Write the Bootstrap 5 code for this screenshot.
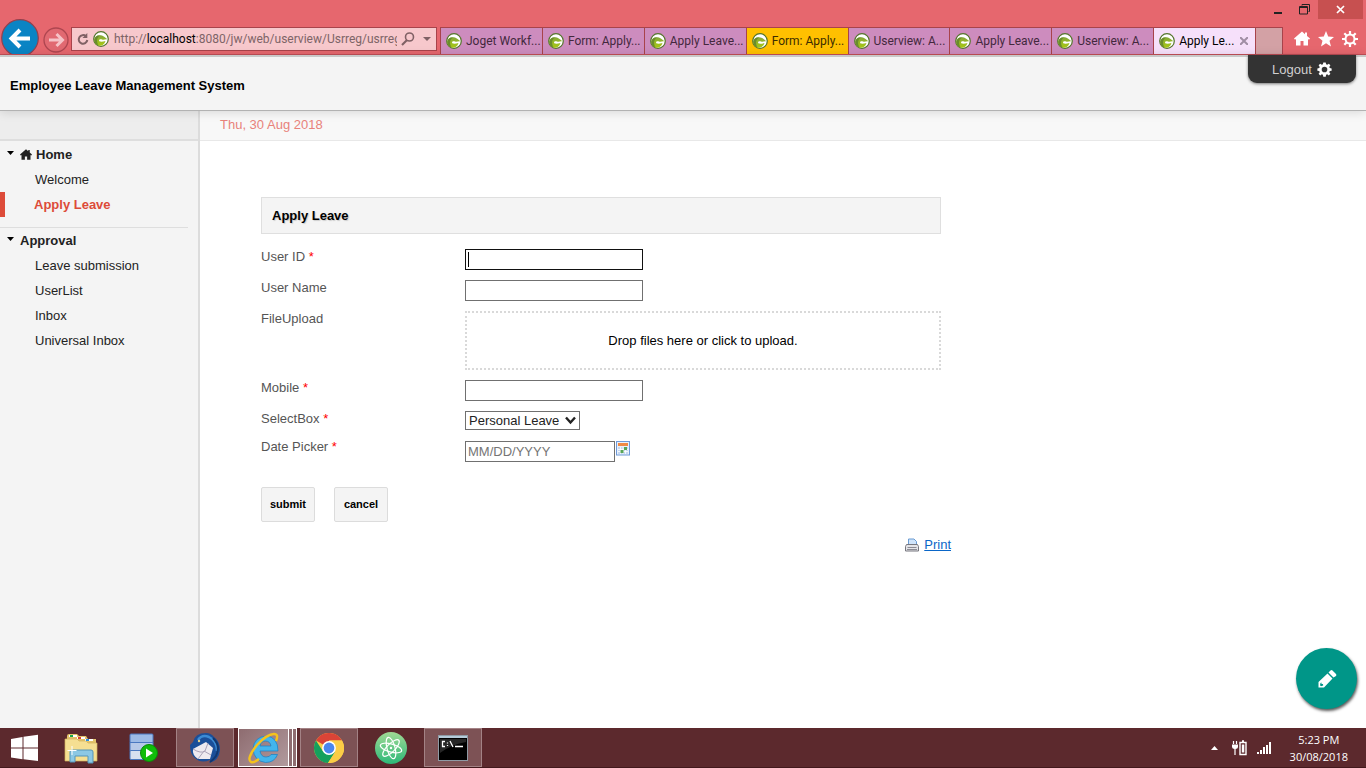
<!DOCTYPE html>
<html lang="en">
<head>
<meta charset="utf-8">
<meta name="viewport" content="width=device-width, initial-scale=1">
<title>Apply Leave</title>
<link href="https://cdn.jsdelivr.net/npm/bootstrap@5.3.0/dist/css/bootstrap.min.css" rel="stylesheet">
<style>
  body { font-family: "Liberation Sans", Arial, sans-serif; font-size: 13px; line-height: 15px; color: #000; background: #fff; }
  button { background: none; border: 0; padding: 0; color: inherit; }
  svg { display: block; flex: none; }

  /* browser frame */
  .frame { background: #e6676e; border-bottom: 1px solid #c24f57; font-family: Roboto, "Segoe UI", sans-serif; font-size: 12px; }
  .caption-bar { height: 27px; padding-right: 3px; }
  .caption-bar button { height: 19px; }
  .win-btn { width: 27px; }
  .win-close { width: 45px; background: #c75050; }
  .toolbar { height: 27px; }
  .nav-pair { width: 71px; }
  .nav-pair .back { margin: -8px 0 0 1px; height: 35px; overflow: hidden; }
  .address { flex: 0 0 366px; min-width: 0; height: 24px; background: #f7c8cc; border: 1px solid #a8434b; padding: 0 5px; gap: 4px; }
  .address .url { color: #7d6467; min-width: 0; flex: 1; overflow: hidden; white-space: nowrap; margin-left: 1px; }
  .address b { font-weight: 400; color: #000; }
  .tabs { border-left: 1px solid #a8434b; margin-left: 3px; min-width: 0; }
  .tab { flex: 1 1 0; min-width: 0; background: #cd8cbe; border: solid #a8434b; border-width: 1px 1px 0 0; padding: 0 3px 0 5px; gap: 4px; color: #43283d; overflow: hidden; white-space: nowrap; text-align: left; }
  .tab-alert { background: #ffc000; color: #3c2c00; }
  .tab-active { background: #f6e0fa; color: #000; }
  .tab-new { flex: 0 0 27px; background: #d3a1a5; border: solid #a8434b; border-width: 1px 1px 0 0; }
  .tools { width: 83px; gap: 8px; padding: 0 8px 4px 0; }

  /* application */
  .app-head { height: 56px; background: #f4f4f4; border-top: 2px solid #c8c8c8; border-bottom: 1px solid #b2b2b2; box-shadow: 0 1px 10px rgba(0,0,0,.14); padding: 4px 10px 0; z-index: 2; }
  .app-head h1 { font-size: 13px; line-height: 15px; }
  .logout { top: -2px; right: 10px; width: 108px; height: 28px; background: #333; color: #d0d0d0; border-radius: 0 0 9px 9px; box-shadow: 0 1px 3px rgba(0,0,0,.5); gap: 5px; }
  .logout:hover { color: #fff; }
  .side { width: 200px; background: #f4f4f4; border-right: 2px solid #dcdcdc; }
  .side-top { height: 30px; background: #ededed; border-bottom: 2px solid #dedede; }
  .date-bar { height: 30px; background: #f8f8f8; border-bottom: 1px solid #e8e8e8; color: #e8827b; padding: 6px 20px; }
  .menu-group { margin-right: 10px; padding: 1px 0 10px; }
  .menu-group + .menu-group { border-top: 1px solid #dedede; padding-top: 0; }
  .menu-head { height: 25px; width: 100%; padding-left: 7px; font-weight: 700; color: #222; }
  .menu-head .caret { width: 13px; padding-bottom: 4px; }
  .menu-group a { display: block; height: 25px; padding: 5px 0 5px 35px; color: #222; text-decoration: none; }
  .menu-group a.current { color: #dd4b39; font-weight: 700; border-left: 5px solid #dd4b39; padding-left: 29px; }

  .work { padding: 56px 61px 0; }
  .form-area { max-width: 680px; }
  .form-title { height: 37px; background: #f4f4f4; border: 1px solid #dfdfdf; padding: 0 10px; margin-bottom: 15px; }
  .form-title h2 { font-size: 13px; line-height: 15px; text-shadow: 1px 1px 1px #ccc; }
  .line { display: grid; grid-template-columns: 30% 70%; margin-bottom: 10px; }
  .line-tight { margin-bottom: 9px; }
  .line > label { color: #555; }
  .line > label span { color: #f00; }
  .field { width: 178px; height: 21px; border: 1px solid #707070; padding: 1px 2px; background: #fff; color: #222; }
  .field::placeholder { color: #757575; opacity: 1; }
  .field:focus { outline: 0; border-color: #111; }
  .field-first { border-color: #111; background: linear-gradient(#000, #000) 2px 2px / 1px 15px no-repeat; caret-color: transparent; }
  .field-date { width: 150px; }
  .date-pick { padding-top: 2px; }
  .drop { height: 59px; border: 2px dotted #d9d9d9; width: 100%; color: #000; }
  .pick { width: 100%; height: 19px; border: 1px solid #707070; padding: 0 18px 0 3px; appearance: none; color: #222; background: none; }
  .pick-box { width: 115px; }
  .pick-box svg { right: 3px; top: 4px; pointer-events: none; }
  .push-row { gap: 19px; margin: 25px 0 15px; }
  .push { min-width: 54px; height: 35px; background: #f4f4f4; border: 1px solid #dcdcdc; border-radius: 2px; font-size: 11px; font-weight: 700; }
  .print-link { color: #0a66c8; margin-right: -10px; gap: 5px; }
  .fab { width: 61px; height: 61px; right: 9px; bottom: 19px; background: #009688; box-shadow: 1px 2px 3px rgba(0,0,0,.65); color: #fff; }

  /* taskbar */
  .taskbar { height: 40px; background: #5c292d; color: #fff; font-family: "Open Sans", "Segoe UI", sans-serif; font-size: 11px; line-height: 17px; border-bottom: 1px solid #43181c; }
  .task { width: 58px; height: 39px; margin-right: 4px; }
  .task-start { width: 48px; padding-left: 11px; }
  .task-open { background: #7d5255; border: 1px solid #a38285; }
  .task-front { width: 51px; margin-right: 0; background: linear-gradient(135deg, #8e6c70, #b19a9d); border: 1px solid #fff; }
  .task-stack { width: 4px; height: 39px; border: 1px solid #fff; border-left: 0; background: #8e6c70; }
  .task-stack-end { margin-right: 3px; }
  .tray { gap: 10px; padding-right: 18px; }
</style>
</head>
<body class="d-flex flex-column min-vh-100">

<svg width="0" height="0" class="position-absolute" aria-hidden="true">
  <defs>
    <linearGradient id="leaf" x1="0" y1="0" x2="0" y2="1"><stop offset="0" stop-color="#84a63a"/><stop offset="1" stop-color="#a9ca12"/></linearGradient>
    <symbol id="joget" viewBox="0 0 16 16">
      <circle cx="8" cy="8" r="7.300" fill="#fff" stroke="#54752c" stroke-width="1.200"/>
      <path d="M1.200 9C1.500 6 4 4 7 4.200 9.500 4.400 11 5 14.500 8.500 12 8 11 9.200 9 8.500 7.500 8 6 8.500 6 9.500 6.200 11 9 11 12.500 10 11.500 13.500 9 14.800 6.500 14.800 3.500 14 1.500 12 1.200 9Z" fill="url(#leaf)"/>
      <path d="M1.200 9C1.500 6 4 4 7 4.500 4 6.500 3 10 5.500 14.300 3 13.500 1.200 11.500 1.200 9Z" fill="#6a8c2c"/>
    </symbol>
    <symbol id="gear" viewBox="0 0 16 16">
      <path fill-rule="evenodd" fill="currentColor" d="M6.700.5h2.600l.4 2 1.200.5L12.600 1.800l1.700 1.700L13.100 5.200l.5 1.200 2 .4v2.500l-2 .4-.5 1.200 1.200 1.700-1.700 1.700-1.700-1.200-1.200.5-.4 2H6.700l-.4-2-1.200-.5-1.700 1.200-1.700-1.700 1.200-1.700-.5-1.200-2-.4V6.800l2-.4.5-1.200L1.700 3.500l1.700-1.700L5.100 3l1.200-.5zM8 5a3 3 0 1 0 0 6 3 3 0 0 0 0-6z"/>
    </symbol>
    <symbol id="gear-thin" viewBox="0 0 16 16">
      <circle cx="8" cy="8" r="4.500" fill="none" stroke="#fff" stroke-width="2"/>
      <path d="M8 0v3.500M8 12.500V16M0 8h3.500M12.500 8H16M2.300 2.300l2.500 2.500M11.200 11.200l2.500 2.500M13.700 2.300l-2.500 2.500M4.800 11.200l-2.500 2.500" stroke="#fff" stroke-width="2.200"/>
    </symbol>
    <symbol id="house" viewBox="0 0 16 14">
      <path fill="currentColor" d="M8 0 0 7l1 1.300L2 7.500V14h4.500V9.500h3V14H14V7.500l1 .8L16 7l-3-2.600V1h-2v1.700z"/>
    </symbol>
  </defs>
</svg>

<header class="frame">
  <div class="caption-bar d-flex justify-content-end align-items-start">
    <button class="win-btn d-flex align-items-center justify-content-center" aria-label="Minimize"><svg width="10" height="10"><path d="M1 7h8v2H1z" fill="#222"/></svg></button>
    <button class="win-btn d-flex align-items-center justify-content-center" aria-label="Restore"><svg width="11" height="11"><path d="M3 1.500V.5h7.500v7H9.500M.5 2.500h8v7.500h-8zM.5 3.500h8" fill="none" stroke="#222"/></svg></button>
    <button class="win-close d-flex align-items-center justify-content-center" aria-label="Close"><svg width="9" height="9"><path d="M1 1l7 7M8 1 1 8" stroke="#fff" stroke-width="1.700"/></svg></button>
  </div>
  <div class="toolbar d-flex">
    <div class="nav-pair d-flex">
      <button class="back" aria-label="Back"><svg width="38" height="38" viewBox="0 0 38 38"><circle cx="19" cy="19" r="18.300" fill="#0a84c4" stroke="#93404d" stroke-width="1.200"/><path d="M29 19.500H11M19 11l-8.500 8.500L19 28" fill="none" stroke="#fff" stroke-width="4"/></svg></button>
      <button class="ms-1 mb-1" aria-label="Forward"><svg width="26" height="26" viewBox="0 0 26 26"><circle cx="13" cy="13" r="12" fill="#e16971" stroke="#ae4650" stroke-width="1.300"/><path d="M6 13h13M13.500 7l6 6-6 6" fill="none" stroke="#f6c3c7" stroke-width="3"/></svg></button>
    </div>
    <div class="address d-flex align-items-center">
      <button aria-label="Refresh"><svg width="12" height="14" viewBox="0 0 12 14"><path d="M9 4.300A4.300 4.300 0 1 0 10.300 8" fill="none" stroke="#806165" stroke-width="2"/><path d="M10.300 1v5H5.500z" fill="#806165"/></svg></button>
      <svg width="16" height="16"><use href="#joget"/></svg>
      <div class="url">http://<b>localhost</b>:8080/jw/web/userview/Usrreg/usrregv</div>
      <button aria-label="Search"><svg width="14" height="14"><circle cx="8.500" cy="5" r="4" fill="none" stroke="#806165" stroke-width="1.600"/><path d="M6 8 1 13" stroke="#806165" stroke-width="2.200"/></svg></button>
      <button aria-label="Address list"><svg width="8" height="5" class="ms-1"><path d="M0 0h8L4 4z" fill="#806165"/></svg></button>
    </div>
    <nav class="tabs d-flex flex-fill" aria-label="Open tabs">
      <button class="tab d-flex align-items-center"><svg width="16" height="16"><use href="#joget"/></svg>Joget Workf...</button>
      <button class="tab d-flex align-items-center"><svg width="16" height="16"><use href="#joget"/></svg>Form: Apply...</button>
      <button class="tab d-flex align-items-center"><svg width="16" height="16"><use href="#joget"/></svg>Apply Leave...</button>
      <button class="tab tab-alert d-flex align-items-center"><svg width="16" height="16"><use href="#joget"/></svg>Form: Apply...</button>
      <button class="tab d-flex align-items-center"><svg width="16" height="16"><use href="#joget"/></svg>Userview: A...</button>
      <button class="tab d-flex align-items-center"><svg width="16" height="16"><use href="#joget"/></svg>Apply Leave...</button>
      <button class="tab d-flex align-items-center"><svg width="16" height="16"><use href="#joget"/></svg>Userview: A...</button>
      <button class="tab tab-active d-flex align-items-center"><svg width="16" height="16"><use href="#joget"/></svg>Apply Le...<svg width="8" height="8" class="ms-auto me-1"><path d="M0 0l8 8M8 0 0 8" stroke="#a08ea4" stroke-width="2"/></svg></button>
      <button class="tab-new" aria-label="New tab"></button>
    </nav>
    <div class="tools d-flex align-items-center justify-content-end text-white">
      <button aria-label="Home"><svg width="16" height="15"><use href="#house"/></svg></button>
      <button aria-label="Favorites"><svg width="16" height="16" viewBox="0 0 16 16"><path d="M8 0l2.200 5.600 5.800.4-4.500 3.700L13 15.500 8 12.200 3 15.500l1.500-5.800L0 6l5.800-.4z" fill="#fff"/></svg></button>
      <button aria-label="Tools"><svg width="16" height="16"><use href="#gear-thin"/></svg></button>
    </div>
  </div>
</header>

<div class="app-head position-relative d-flex align-items-center">
  <h1 class="fw-bold m-0">Employee Leave Management System</h1>
  <a href="#" class="logout position-absolute d-flex align-items-center justify-content-center text-decoration-none">Logout
    <svg width="15" height="15" class="text-white"><use href="#gear"/></svg></a>
</div>

<div class="d-flex flex-fill position-relative">
  <aside class="side flex-shrink-0">
    <div class="side-top"></div>
    <nav aria-label="Main">
      <div class="menu-group">
        <button class="menu-head d-flex align-items-center"><span class="caret"><svg width="7" height="4"><path d="M0 0h7L3.500 4z"/></svg></span>
          <svg width="12" height="11" class="me-1"><use href="#house"/></svg>Home</button>
        <a href="#">Welcome</a>
        <a href="#" class="current">Apply Leave</a>
      </div>
      <div class="menu-group">
        <button class="menu-head d-flex align-items-center"><span class="caret"><svg width="7" height="4"><path d="M0 0h7L3.500 4z"/></svg></span>Approval</button>
        <a href="#">Leave submission</a>
        <a href="#">UserList</a>
        <a href="#">Inbox</a>
        <a href="#">Universal Inbox</a>
      </div>
    </nav>
  </aside>

  <main class="flex-fill">
    <div class="date-bar">Thu, 30 Aug 2018</div>
    <div class="work">
      <form class="form-area">
        <div class="form-title d-flex align-items-center"><h2 class="fw-bold m-0">Apply Leave</h2></div>
        <div class="line"><label for="uid">User ID <span>*</span></label><input id="uid" class="field field-first" type="text"></div>
        <div class="line"><label for="uname">User Name</label><input id="uname" class="field" type="text"></div>
        <div class="line"><label for="upload">FileUpload</label><button id="upload" type="button" class="drop">Drop files here or click to upload.</button></div>
        <div class="line"><label for="mobile">Mobile <span>*</span></label><input id="mobile" class="field" type="text"></div>
        <div class="line line-tight"><label for="kind">SelectBox <span>*</span></label>
          <div class="pick-box position-relative"><select id="kind" class="pick d-block rounded-0"><option>Personal Leave</option></select>
            <svg width="13" height="10" class="position-absolute"><path d="M2 2.500 6.500 7.500 11 2.500" fill="none" stroke="#222" stroke-width="2.400"/></svg></div></div>
        <div class="line line-tight"><label for="day">Date Picker <span>*</span></label>
          <div class="date-pick d-flex"><input id="day" class="field field-date" type="text" placeholder="MM/DD/YYYY">
            <button type="button" aria-label="Choose date" class="align-self-start"><svg width="16" height="15" viewBox="0 0 16 15"><rect x="1.500" y=".5" width="13" height="13.500" fill="#e8f1fc" stroke="#6f9ad8"/><path d="M3 2h10v3H3z" fill="#f08a45"/><path d="M3 6h10v7H3z" fill="#c6d8f0"/><path d="M3 8.500h10M3 10.500h10M5.500 6v7M8 6v7M10.500 6v7" stroke="#fff" stroke-width=".8"/><path d="M9 6h3v3H9zM5.500 9h3v3h-3z" fill="#58a557"/></svg></button></div></div>
        <div class="push-row d-flex"><button type="button" class="push">submit</button><button type="button" class="push">cancel</button></div>
        <div class="text-end"><a href="#" class="print-link d-inline-flex align-items-center"><svg width="14" height="14" viewBox="0 0 14 14"><path d="M3.500 7V1h5.500l2.500 2.500V7z" fill="#cfe4fb" stroke="#6b9bd2"/><path d="M1.500 6.500h11l1 2v4.500H.5V8.500z" fill="#e4e4e8" stroke="#77777f"/><path d="M2.500 9.500h9M2 11.500h10" stroke="#8c8c95"/></svg>Print</a></div>
      </form>
    </div>
  </main>
  <button class="fab position-absolute rounded-circle d-flex align-items-center justify-content-center" aria-label="Edit"><svg width="20" height="20" viewBox="0 0 20 20"><path fill="currentColor" fill-rule="evenodd" d="M1.500 18.500V13L10.500 4.500l5 5L7 18.500zM11.500 3.500l2-2q1-.8 2 0l3.500 3.500q.8 1 0 2l-2.500 1.500zM3.500 14l-.5 2.200 1 1L6.200 16.500 6 15H4.500V13.500z"/></svg></button>
</div>

<footer class="taskbar d-flex align-items-start">
  <button class="task task-start d-flex align-items-center" aria-label="Start"><svg width="28" height="28" viewBox="0 0 28 28"><path d="M0 5l11.500-2v10.500H0zM12.500 2.800 27 .8v12.700H12.500zM0 14.500h11.500v10.700L0 23.400zM12.500 14.500H27V27l-14.500-1.800z" fill="#fff"/></svg></button>
  <button class="task d-flex align-items-center justify-content-center" aria-label="File Explorer"><svg width="34" height="32" viewBox="0 0 34 32"><path d="M3 4q0-2 2-2h8l2 2h7l2 3h8v21H2z" fill="#e3c46b"/><path d="M5 3h8v2H5zM13 5h8v2h-8zM21 7h8v2h-8z" fill="#fff"/><path d="M6 3h3v2H6z" fill="#17a84a"/><path d="M14 5h3v2h-3z" fill="#d8452f"/><path d="M22 7h3v2h-3z" fill="#2b8fe0"/><path d="M1 7h12l2 2h7l2 2h9v18H1z" fill="#f5df92" stroke="#d3b35b" stroke-width=".7"/><path d="M6 30V20q0-2 2-2h19q2 0 2 2v11h-5v-7H11v6z" fill="#8cc8e4" stroke="#5595b8"/><path d="M8 14v9M3.500 18.500h9" stroke="#fff"/></svg></button>
  <button class="task d-flex align-items-center justify-content-center" aria-label="Server"><svg width="30" height="30" viewBox="0 0 30 30"><rect x="2" y="1" width="23" height="8.500" rx="1" fill="#9dbbe6" stroke="#4a78c0"/><rect x="2" y="9.500" width="23" height="8" fill="#b6c9e8" stroke="#4a78c0"/><rect x="2" y="17.500" width="23" height="9" rx="1" fill="#d7e0f0" stroke="#4a78c0"/><circle cx="21" cy="20" r="8.500" fill="#0fbd0a" stroke="#0a8909"/><path d="M18 15.500 25 20l-7 4.500z" fill="#fff"/></svg></button>
  <button class="task task-open d-flex align-items-center justify-content-center" aria-label="Mail"><svg width="32" height="32" viewBox="0 0 32 32"><path d="M1 13 4 10Q6 1 17 1q5 0 8 4 6 4 6 13-1 11-11 13 2-2 1-3-9 4-15-2Q1 22 1 13z" fill="#1b4f99"/><path d="M9 8Q13 2 20 5q8 4 8 14" fill="none" stroke="#3b8bd5" stroke-width="2.500"/><path d="M4 17 17 10l7 6-3 11L9 27Q3 23 4 17z" fill="#eeeaf0"/><path d="M4 17q8 5 12 2l3-8M9 27l6-8 7 4" fill="none" stroke="#aaa2b8"/><path d="M24 6q8 8 3 18-3 4-6 6" fill="none" stroke="#12376f" stroke-width="2"/><circle cx="10" cy="9" r="1.200" fill="#e7d38b"/></svg></button>
  <button class="task task-front d-flex align-items-center justify-content-center" aria-label="Internet Explorer"><svg width="32" height="32" viewBox="0 0 32 32"><path fill-rule="evenodd" d="M30 19H12q1 6 6 6 4 0 5-2.500h6.500q-3 8-12 8Q6 29 5 17 6 5 18 4q12 1 12 15zM12 14h11q-1-5-5.500-5T12 14z" fill="#43b5ec" stroke="#177fc4" stroke-width=".7"/><path d="M28 9Q31 2 26 2 19 2 9 13-2 27 3 30q3 1 8-3" fill="none" stroke="#f4c21d" stroke-width="2.400"/></svg></button>
  <span class="task-stack"></span><span class="task-stack task-stack-end"></span>
  <button class="task task-open d-flex align-items-center justify-content-center" aria-label="Chrome"><svg width="30" height="30" viewBox="0 0 30 30"><circle cx="15" cy="15" r="15" fill="#fbcd46"/><path d="M15 15 2 7.500A15 15 0 0 1 28 7.500H15z" fill="#da4437"/><path d="M2 7.500A15 15 0 0 0 14 30L21 19 15 15 8.700 18z" fill="#15a05d"/><path d="M15 7.500H28A15 15 0 0 1 14 30l7.500-11.500z" fill="#fbcd46"/><circle cx="15" cy="15" r="6.900" fill="#fff"/><circle cx="15" cy="15" r="5.400" fill="#4a86ee"/></svg></button>
  <button class="task d-flex align-items-center justify-content-center" aria-label="Atom"><svg width="32" height="32" viewBox="0 0 32 32"><defs><linearGradient id="mint" x1="0" y1="0" x2="0" y2="1"><stop offset="0" stop-color="#a0d995"/><stop offset="1" stop-color="#2cb978"/></linearGradient></defs><circle cx="16" cy="16" r="16" fill="url(#mint)"/><g fill="none" stroke="#fff" stroke-width="1.200"><ellipse cx="16" cy="16" rx="4" ry="11" transform="rotate(-15 16 16)"/><ellipse cx="16" cy="16" rx="4" ry="11" transform="rotate(45 16 16)"/><ellipse cx="16" cy="16" rx="4" ry="11" transform="rotate(105 16 16)"/></g><circle cx="16" cy="16" r="1.200" fill="#fff"/></svg></button>
  <button class="task task-open d-flex align-items-center justify-content-center" aria-label="Command Prompt"><svg width="30" height="26" viewBox="0 0 30 26"><rect x=".5" y=".5" width="29" height="25" fill="#000" stroke="#8f9aa4"/><path d="M1 1h28v2H1z" fill="#b5cbd9"/><path d="M2 4h26v3Q12 10 2 18z" fill="#262626"/><path d="M7 6.500H4.500v5H7M9.500 7.500v1M9.500 10v1M12 6l3 6M17 11.500h8" fill="none" stroke="#fff" stroke-width="1.300"/></svg></button>
  <div class="tray d-flex align-items-center ms-auto h-100">
    <svg width="7" height="4" class="me-1"><path d="M0 4 3.500 0 7 4z" fill="#fff"/></svg>
    <svg width="15" height="16" viewBox="0 0 15 16"><path d="M1.500 1v3M4.500 1v3M3 8v7" stroke="#fff" stroke-width="1.200"/><path d="M0 4.500h6v2Q6 9 3 9T0 6.500z" fill="#fff"/><path d="M8 2.500h6v12H8zM10 1h2" fill="none" stroke="#fff" stroke-width="1.400"/><path d="M9.800 4.500h2.500v8H9.800z" fill="#fff"/></svg>
    <svg width="15" height="12"><path d="M0 10h2v2H0zM3 8h2v4H3zM6 5h2v7H6zM9 3h2v9H9zM12 0h2v12h-2z" fill="#fff"/></svg>
    <div class="text-center ms-2">5:23 PM<br>30/08/2018</div>
  </div>
</footer>
<script src="https://cdn.jsdelivr.net/npm/bootstrap@5.3.0/dist/js/bootstrap.bundle.min.js"></script>
</body>
</html>
